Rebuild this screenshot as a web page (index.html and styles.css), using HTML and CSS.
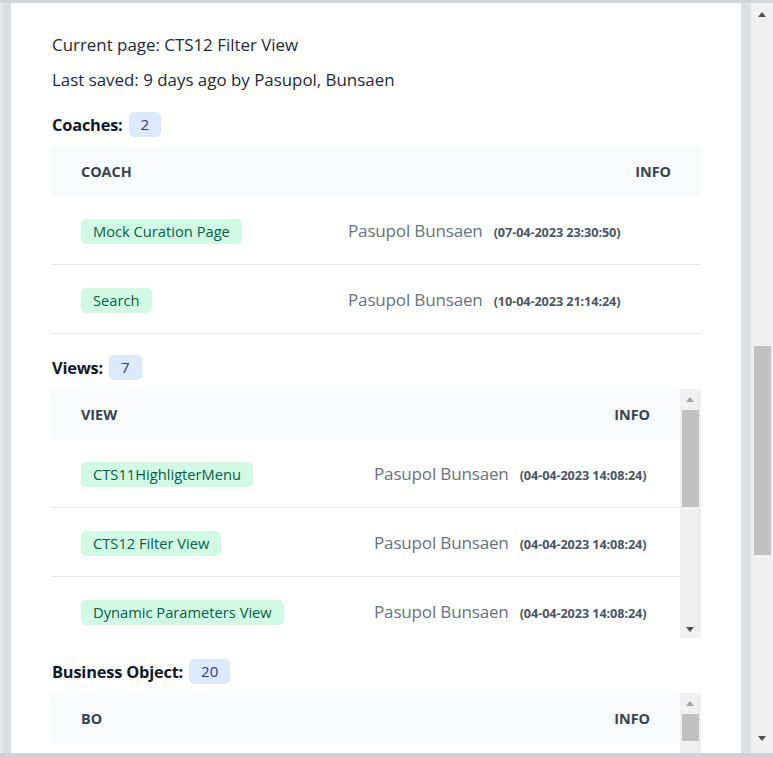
FILE: index.html
```html
<!DOCTYPE html>
<html>
<head>
<meta charset="utf-8">
<link rel="stylesheet" href="styles.css">
</head>
<body>
<div class="frame">
  <div class="top-line"></div>
  <div class="main">
    <div class="left-strip"></div>
    <div class="content">
      <p class="meta">Current page: CTS12 Filter View</p>
      <p class="meta">Last saved: 9 days ago by Pasupol, Bunsaen</p>

      <div class="section-title first"><span>Coaches:</span><span class="count">2</span></div>
      <div class="table coach">
        <div class="row head"><div class="c1">COACH</div><div class="c2">INFO</div></div>
        <div class="row"><div class="c1"><span class="tag">Mock Curation Page</span></div><div class="c2 info"><span class="name">Pasupol Bunsaen</span><span class="date">(07-04-2023 23:30:50)</span></div></div>
        <div class="row"><div class="c1"><span class="tag">Search</span></div><div class="c2 info"><span class="name">Pasupol Bunsaen</span><span class="date">(10-04-2023 21:14:24)</span></div></div>
      </div>

      <div class="section-title"><span>Views:</span><span class="count">7</span></div>
      <div class="scrollbox views-box">
        <div class="table views">
          <div class="row head"><div class="c1">VIEW</div><div class="c2">INFO</div></div>
          <div class="row"><div class="c1"><span class="tag">CTS11HighligterMenu</span></div><div class="c2 info"><span class="name">Pasupol Bunsaen</span><span class="date">(04-04-2023 14:08:24)</span></div></div>
          <div class="row"><div class="c1"><span class="tag">CTS12 Filter View</span></div><div class="c2 info"><span class="name">Pasupol Bunsaen</span><span class="date">(04-04-2023 14:08:24)</span></div></div>
          <div class="row"><div class="c1"><span class="tag">Dynamic Parameters View</span></div><div class="c2 info"><span class="name">Pasupol Bunsaen</span><span class="date">(04-04-2023 14:08:24)</span></div></div>
        </div>
        <div class="sbar inner">
          <div class="arrow up dim"></div>
          <div class="thumb views-thumb"></div>
          <div class="spacer"></div>
          <div class="arrow down"></div>
        </div>
      </div>

      <div class="section-title"><span>Business Object:</span><span class="count">20</span></div>
      <div class="scrollbox bo-box">
        <div class="table views">
          <div class="row head"><div class="c1">BO</div><div class="c2">INFO</div></div>
        </div>
        <div class="sbar inner">
          <div class="arrow up dim"></div>
          <div class="thumb bo-thumb"></div>
        </div>
      </div>
    </div>
    <div class="gap-strip"></div>
    <div class="sbar outer">
      <div class="arrow up"></div>
      <div class="outer-space top"></div>
      <div class="thumb outer-thumb"></div>
      <div class="spacer"></div>
      <div class="arrow down"></div>
    </div>
  </div>
  <div class="bottom-line"></div>
</div>
</body>
</html>
```

FILE: styles.css
```css
* { box-sizing: border-box; }
html, body { margin: 0; padding: 0; }
body {
  width: 773px;
  height: 757px;
  overflow: hidden;
  background: #e4e5e8;
  font-family: "Open Sans", "Noto Sans", sans-serif;
}
.frame {
  height: 757px;
  display: flex;
  flex-direction: column;
}
.top-line { height: 3px; background: #d4d5d8; flex: none; }
.bottom-line { height: 4px; background: #d0d1d4; flex: none; }
.main { flex: 1; display: flex; min-height: 0; }
.left-strip { width: 11px; flex: none; background: #dcdde2; border-left: 3px solid #e9e9ea; }
.gap-strip { width: 10px; flex: none; background: #dfe0e4; }
.content {
  width: 730px;
  flex: none;
  background: #fff;
  padding: 30px 40px 0 40px;
  overflow: hidden;
}
.meta {
  margin: 0 0 11px;
  font-size: 16.9px;
  line-height: 24px;
  color: #1f2937;
  padding-left: 1px;
}
.section-title {
  display: flex;
  align-items: center;
  gap: 6px;
  margin: 21px 0 9px;
  font-size: 16.4px;
  font-weight: 700;
  color: #111827;
  height: 25px;
  padding-left: 1px;
  letter-spacing: -0.2px;
}
.section-title.first { margin-top: 20px; }
.count {
  background: #dbeafe;
  color: #3730a3;
  font-weight: 400;
  font-size: 15px;
  height: 25px;
  line-height: 25px;
  padding: 0 12px;
  border-radius: 5px;
  letter-spacing: 0;
}
.table { display: flex; flex-direction: column; }
.row {
  display: grid;
  align-items: center;
  height: 69px;
  flex: none;
  border-bottom: 1px solid #e5e7eb;
}
.coach .row { grid-template-columns: 297px 1fr; }
.views .row { grid-template-columns: 323px 1fr; }
.row.head {
  height: 50px;
  background: #f9fafb;
  border-bottom: none;
  font-size: 14.4px;
  font-weight: 700;
  color: #374151;
}
.c1 { padding-left: 30px; }
.head .c2 { text-align: right; padding-right: 30px; }
.tag {
  display: inline-block;
  background: #d1fae5;
  color: #065f46;
  font-size: 14.7px;
  height: 25px;
  line-height: 25px;
  padding: 0 12px;
  border-radius: 5px;
  margin-top: 3px;
}
.info { display: flex; align-items: baseline; gap: 11px; }
.name { font-size: 17.1px; color: #6b7280; letter-spacing: -0.2px; }
.date { font-size: 12.7px; font-weight: 700; color: #4b5563; letter-spacing: -0.1px; }
.scrollbox { display: flex; overflow: hidden; }
.scrollbox .table { flex: 1; min-width: 0; }
.views-box { height: 249px; }
.bo-box { height: 70px; }
.sbar { display: flex; flex-direction: column; align-items: center; background: #f0f0f0; flex: none; }
.sbar.inner { width: 21px; }
.sbar.outer { width: 22px; }
.thumb { background: #c1c1c1; width: 17px; flex: none; }
.views-thumb { height: 97px; }
.bo-thumb { height: 27px; }
.outer-thumb { height: 209px; }
.outer-space.top { height: 322px; flex: none; }
.spacer { flex: 1; }
.arrow { height: 21px; width: 17px; flex: none; position: relative; }
.arrow::after {
  content: "";
  position: absolute;
  left: 4px;
  border-left: 4.5px solid transparent;
  border-right: 4.5px solid transparent;
}
.arrow.up::after { top: 8px; border-bottom: 5px solid #505050; }
.arrow.down::after { top: 8px; border-top: 5px solid #505050; }
.arrow.up.dim::after { border-bottom-color: #a3a3a3; }
.inner .arrow.down { height: 17px; }
.inner .arrow.down::after { top: 6px; }
.outer .arrow.down::after { top: 4px; }
.outer .arrow.up::after { top: 9px; }
```
